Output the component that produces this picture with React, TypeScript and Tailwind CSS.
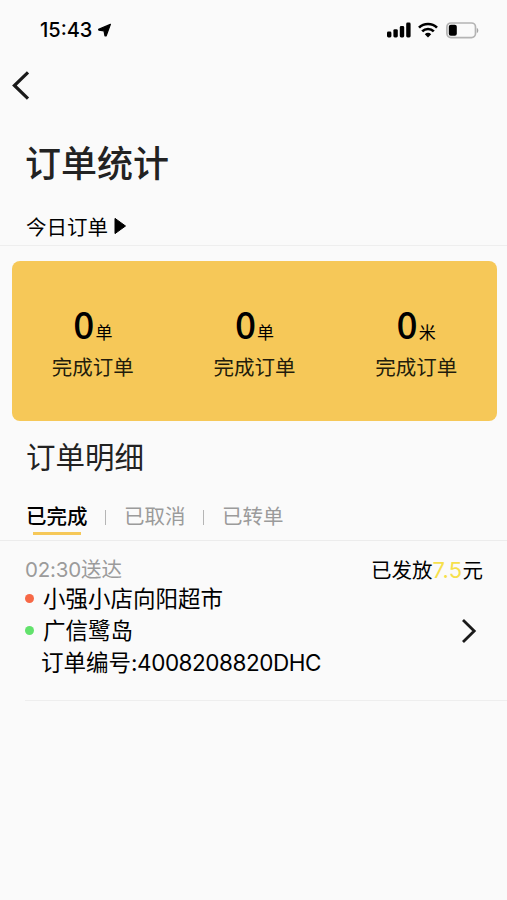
export default function OrderStatsPage() {
  const stats = [
    { value: '0', unit: '单', label: '完成订单' },
    { value: '0', unit: '单', label: '完成订单' },
    { value: '0', unit: '米', label: '完成订单' },
  ];

  return (
    <div className="h-[900px] w-[507px] overflow-hidden bg-[#fafafa] text-black font-['Inter','Noto_Sans_CJK_SC',sans-serif]">
      {/* status bar */}
      <div className="flex h-[60px] items-center pl-[40px] pr-[28px]">
        <span className="w-[56px] whitespace-nowrap text-[20px] font-medium leading-[24px]">15:43</span>
        <svg className="ml-[1px]" width="15" height="15" viewBox="0 0 15 15">
          <path d="M13.4 1.4L1.6 6.2L2 7.2L7 7.8L8 13L9.2 12.8Z" fill="#000" stroke="#000" strokeWidth="1.2" strokeLinejoin="round" />
        </svg>
        <div className="flex-1" />
        <svg width="24" height="16" viewBox="0 0 24 16">
          <rect x="0" y="9.6" width="4.4" height="5.9" rx="1.4" />
          <rect x="6.4" y="7.2" width="4.4" height="8.3" rx="1.4" />
          <rect x="12.8" y="4" width="4.4" height="11.5" rx="1.4" />
          <rect x="19.2" y="0.6" width="4.4" height="14.9" rx="1.4" />
        </svg>
        <svg className="ml-[7px]" width="20" height="16" viewBox="0 0 20 16" fill="none" stroke="#000" strokeWidth="2.7">
          <path d="M1 5.6C6 0.8 14 0.8 19 5.6" />
          <path d="M4.2 9.4C7.4 6.2 12.6 6.2 15.8 9.4" />
          <path d="M10 15.4L6.8 12.2C8.6 10.4 11.4 10.4 13.2 12.2Z" fill="#000" stroke="none" />
        </svg>
        <svg className="ml-[8px]" width="33" height="17" viewBox="0 0 33 17">
          <rect x="0.9" y="1" width="28.6" height="14.6" rx="4" fill="none" stroke="#b4b4b4" strokeWidth="1.7" />
          <rect x="2.8" y="2.8" width="8" height="11" rx="2" />
          <path d="M30.8 6C32.8 6.6 32.8 10.4 30.8 11Z" fill="#a5a5a5" />
        </svg>
      </div>

      <div className="flex h-[50px] items-center pl-[12px]">
        <svg width="18" height="30" viewBox="0 0 18 30" fill="none" stroke="#1a1a1a" strokeWidth="3.2">
          <path d="M16 2.4L2.4 15.5L16 28.6" />
        </svg>
      </div>

      <h1 className="mt-[28px] h-[52px] pl-[25px] text-[36px] font-medium leading-[52px] text-[#222]">订单统计</h1>

      <div className="mt-[20px] flex h-[36px] items-center border-b border-[#eee] pl-[26px]">
        <span className="h-[30px] text-[20.5px] leading-[30px]">今日订单</span>
        <svg className="mb-[3px] ml-[6px]" width="13" height="18" viewBox="0 0 13 18">
          <path d="M1 1.4L11.5 9L1 16.6Z" stroke="#000" strokeLinejoin="round" />
        </svg>
      </div>

      <div className="ml-[12px] mr-[10px] mt-[15px] grid h-[160px] grid-cols-3 rounded-lg bg-[#f6c858] pt-[38px]">
        {stats.map((s, i) => (
          <div key={i} className="text-center">
            <div className="flex h-[54px] items-baseline justify-center">
              <span className="mr-[1px] text-[37px] font-medium leading-[48px] font-['Noto_Sans_CJK_SC',sans-serif]">{s.value}</span>
              <span className="text-[17px] leading-[24px]">{s.unit}</span>
            </div>
            <div className="text-[20.5px] leading-[30px] text-[#221c0c]">{s.label}</div>
          </div>
        ))}
      </div>

      <h2 className="mt-[14px] h-[44px] pl-[26px] text-[29.5px] leading-[44px] text-[#222]">订单明细</h2>

      <div className="mt-[22px] flex h-[40px] border-b border-[#ececec] pl-[26px] text-[20.5px] leading-[32px] text-[#9b9b9b]">
        <div className="flex flex-col items-center text-black">
          <span className="h-[31px] font-medium">已完成</span>
          <span className="h-[3px] w-[48px] bg-[#f6c858]" />
        </div>
        <span className="ml-[17px] mt-[9px] h-[15px] w-[1.5px] bg-[#b5b5b5]" />
        <span className="ml-[18px]">已取消</span>
        <span className="ml-[17px] mt-[9px] h-[15px] w-[1.5px] bg-[#b5b5b5]" />
        <span className="ml-[18px]">已转单</span>
      </div>

      {/* order item */}
      <div className="ml-[25px] h-[160px] border-b border-[#eee] pt-[14px]">
        <div className="flex h-[28px] justify-between pr-[24px] text-[20.5px] leading-[30px]">
          <span className="text-[#9b9b9b]">
            <span className="tracking-[-0.2px]">02:30</span>送达
          </span>
          <span>
            已发放<span className="text-[22px] tracking-[0.3px] text-[#f6e04a]">7.5</span>元
          </span>
        </div>
        <div className="flex items-center pr-[30px] text-[22.5px] leading-[32px]">
          <div className="flex-1">
            <div className="flex items-center">
              <span className="mb-[2px] mr-[9px] size-[9px] rounded-full bg-[#f76846]" />
              小强小店向阳超市
            </div>
            <div className="flex items-center">
              <span className="mb-[2px] mr-[9px] size-[9px] rounded-full bg-[#62e26c]" />
              广信鹭岛
            </div>
            <div className="pl-[16px]">
              订单编号<span className="tracking-[-0.45px]">:4008208820DHC</span>
            </div>
          </div>
          <svg width="16" height="26" viewBox="0 0 16 26" fill="none" stroke="#1a1a1a" strokeWidth="2.8">
            <path d="M2 2L13.2 13L2 24" />
          </svg>
        </div>
      </div>
    </div>
  );
}
